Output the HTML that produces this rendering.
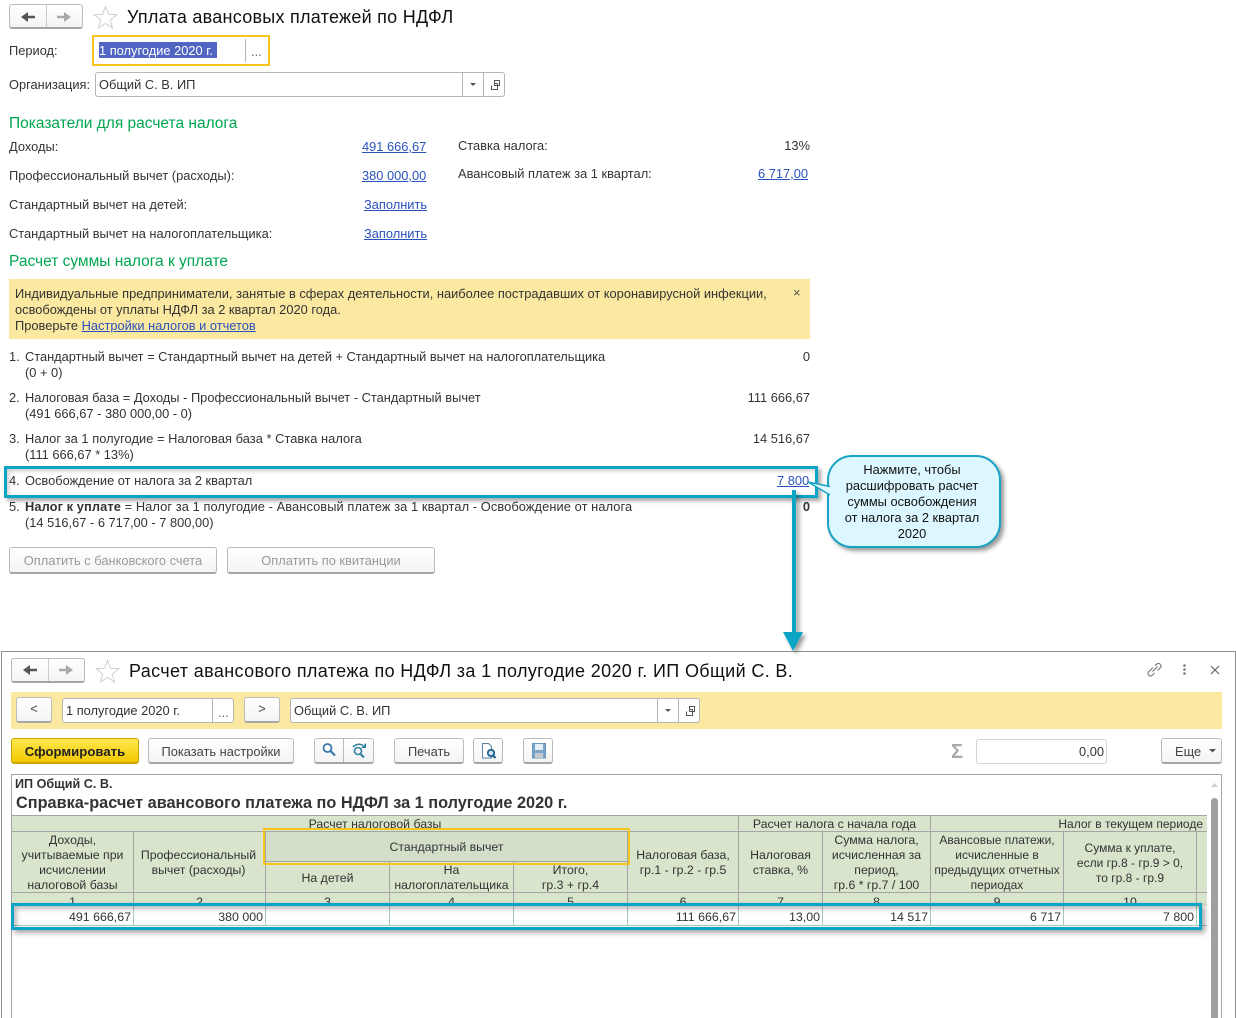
<!DOCTYPE html>
<html lang="ru"><head><meta charset="utf-8"><title>Уплата авансовых платежей по НДФЛ</title>
<style>
html,body{margin:0;padding:0;background:#fff;width:1236px;height:1018px;overflow:hidden}
#w{position:absolute;left:0;top:0;width:1236px;height:1018px;overflow:hidden;font:12.85px/16px "Liberation Sans",Arial,sans-serif;color:#333}
.t{position:absolute;white-space:nowrap}
.r{text-align:right}.c{text-align:center}
.b{position:absolute;box-sizing:border-box}
a,.l{color:#2a52be;text-decoration:underline}
.g{color:#00a650;font-size:15.5px;line-height:18px}
.btn{position:absolute;box-sizing:border-box;border:1px solid #bbb;border-bottom:2px solid #a5a5a5;border-radius:3px;background:linear-gradient(#fff,#f4f4f4);text-align:center;color:#444;line-height:22px}
.inp{position:absolute;box-sizing:border-box;border:1px solid #b5b5b5;border-radius:3px;background:#fff;line-height:24px;padding-left:3px}
.s{position:absolute;width:1px;background:#b5b5b5}
.h{font-size:18px;color:#111;letter-spacing:.26px;line-height:22px}
.cell{position:absolute;box-sizing:border-box;background:#d8e4cc;border-right:1px solid #a5a5a5;border-bottom:1px solid #a5a5a5;display:flex;align-items:center;justify-content:center;text-align:center;line-height:15px;color:#333;font-size:12.3px;padding-top:2px;white-space:nowrap;overflow:hidden}
.d{position:absolute;box-sizing:border-box;background:#fff;border-right:1px solid #a9c9c0;border-bottom:1px solid #a9c9c0;text-align:right;padding:2px 2px 0 0;line-height:19px;font-size:12.4px;color:#333}
.n{padding-top:3px;align-items:flex-start;line-height:13px}
</style></head><body><div id="w">

<!-- top form -->
<div class="btn" style="left:9px;top:4px;width:74px;height:25px"></div>
<div class="s" style="left:46px;top:5px;height:22px;background:#ccc"></div>
<svg class="b" style="left:9px;top:4px" width="74" height="25"><path d="M12 13l7-5v10z" fill="#555"/><path d="M18 13h8" stroke="#555" stroke-width="2.500"/><path d="M62 13l-7-5v10z" fill="#aaa"/><path d="M48 13h8" stroke="#aaa" stroke-width="2.500"/></svg>
<svg class="b" style="left:93px;top:5px" width="25" height="24"><path d="M12.500 1.500l3 7.800 8.300.5-6.500 5.200 2.200 8-7-4.500-7 4.500 2.200-8-6.500-5.200 8.300-.5z" fill="#fff" stroke="#cfcfcf"/></svg>
<div class="t h" style="left:127px;top:6px">Уплата авансовых платежей по НДФЛ</div>

<div class="t" style="left:9px;top:43px">Период:</div>
<div class="b" style="left:92px;top:35px;width:178px;height:31px;border:2px solid #f7c51e"></div>
<div class="b" style="left:99px;top:42px;width:118px;height:16px;background:#5066c2"></div>
<div class="t" style="left:99px;top:43px;color:#fff">1 полугодие 2020 г.</div>
<div class="s" style="left:245px;top:39px;height:23px"></div>
<div class="t" style="left:251px;top:44px;color:#666">...</div>

<div class="t" style="left:9px;top:77px">Организация:</div>
<div class="inp" style="left:95px;top:72px;width:410px;height:25px">Общий С. В. ИП</div>
<div class="s" style="left:462px;top:73px;height:23px"></div>
<div class="s" style="left:483px;top:73px;height:23px"></div>
<svg class="b" style="left:463px;top:73px" width="41" height="23"><path d="M7 10h6l-3 3z" fill="#555"/><path d="M28.500 12.500v4h6v-6h-3M31.500 7.500h5v5h-5z" fill="#fff" stroke="#555"/></svg>

<div class="t g" style="left:9px;top:115px">Показатели для расчета налога</div>
<div class="t" style="left:9px;top:139px">Доходы:</div>
<a class="t" style="left:362px;top:139px">491 666,67</a>
<div class="t" style="left:458px;top:138px">Ставка налога:</div>
<div class="t r" style="right:426px;top:138px">13%</div>
<div class="t" style="left:9px;top:168px">Профессиональный вычет (расходы):</div>
<a class="t" style="left:362px;top:168px">380 000,00</a>
<div class="t" style="left:458px;top:166px">Авансовый платеж за 1 квартал:</div>
<a class="t" style="left:758px;top:166px">6 717,00</a>
<div class="t" style="left:9px;top:197px">Стандартный вычет на детей:</div>
<a class="t" style="left:364px;top:197px">Заполнить</a>
<div class="t" style="left:9px;top:226px">Стандартный вычет на налогоплательщика:</div>
<a class="t" style="left:364px;top:226px">Заполнить</a>
<div class="t g" style="left:9px;top:253px">Расчет суммы налога к уплате</div>

<div class="b" style="left:9px;top:279px;width:801px;height:60px;background:#fbe9a2"></div>
<div class="t" style="left:15px;top:286px">Индивидуальные предприниматели, занятые в сферах деятельности, наиболее пострадавших от коронавирусной инфекции,</div>
<div class="t" style="left:15px;top:302px">освобождены от уплаты НДФЛ за 2 квартал 2020 года.</div>
<div class="t" style="left:15px;top:318px">Проверьте <a>Настройки налогов и отчетов</a></div>
<div class="t" style="left:793px;top:285px;color:#555">×</div>

<div class="t" style="left:9px;top:349px">1.</div><div class="t" style="left:25px;top:349px;letter-spacing:-.03px">Стандартный вычет = Стандартный вычет на детей + Стандартный вычет на налогоплательщика</div>
<div class="t" style="left:25px;top:365px">(0 + 0)</div>
<div class="t r" style="right:426px;top:349px">0</div>
<div class="t" style="left:9px;top:390px">2.</div><div class="t" style="left:25px;top:390px">Налоговая база = Доходы - Профессиональный вычет - Стандартный вычет</div>
<div class="t" style="left:25px;top:406px">(491 666,67 - 380 000,00 - 0)</div>
<div class="t r" style="right:426px;top:390px">111 666,67</div>
<div class="t" style="left:9px;top:431px">3.</div><div class="t" style="left:25px;top:431px;letter-spacing:.04px">Налог за 1 полугодие = Налоговая база * Ставка налога</div>
<div class="t" style="left:25px;top:447px">(111 666,67 * 13%)</div>
<div class="t r" style="right:426px;top:431px">14 516,67</div>
<div class="t" style="left:9px;top:473px">4.</div><div class="t" style="left:25px;top:473px">Освобождение от налога за 2 квартал</div>
<a class="t" style="left:777px;top:473px">7 800</a>
<div class="t" style="left:9px;top:499px">5.</div><div class="t" style="left:25px;top:499px;letter-spacing:.08px"><b>Налог к уплате</b> = Налог за 1 полугодие - Авансовый платеж за 1 квартал - Освобождение от налога</div>
<div class="t" style="left:25px;top:515px">(14 516,67 - 6 717,00 - 7 800,00)</div>
<div class="t r" style="right:426px;top:499px;font-weight:bold">0</div>

<div class="btn" style="left:9px;top:547px;width:208px;height:27px;color:#999;line-height:25px">Оплатить с банковского счета</div>
<div class="btn" style="left:227px;top:547px;width:208px;height:27px;color:#999;line-height:25px">Оплатить по квитанции</div>

<!-- lower window -->
<div class="b" style="left:1px;top:651px;width:1235px;height:380px;border:1px solid #8f8f8f;background:#fff"></div>
<div class="btn" style="left:11px;top:658px;width:74px;height:25px"></div>
<div class="s" style="left:48px;top:659px;height:22px;background:#ccc"></div>
<svg class="b" style="left:11px;top:658px" width="74" height="25"><path d="M12 12l7-5v10z" fill="#555"/><path d="M18 12h8" stroke="#555" stroke-width="2.500"/><path d="M62 12l-7-5v10z" fill="#aaa"/><path d="M48 12h8" stroke="#aaa" stroke-width="2.500"/></svg>
<svg class="b" style="left:95px;top:659px" width="25" height="24"><path d="M12.500 1.500l3 7.800 8.300.5-6.500 5.200 2.200 8-7-4.500-7 4.500 2.200-8-6.500-5.200 8.300-.5z" fill="#fff" stroke="#cfcfcf"/></svg>
<div class="t h" style="left:129px;top:660px;letter-spacing:.36px">Расчет авансового платежа по НДФЛ за 1 полугодие 2020 г. ИП Общий С. В.</div>
<svg class="b" style="left:1145px;top:661px" width="20" height="18"><g fill="none" stroke="#777" stroke-width="1.100"><path d="M8 6.500l-4.500 4.500a2.500 2.500 0 0 0 3.500 3.500l2.500-2.500"/><path d="M7.500 10.500l5-5M10 4.500l2-1.500a2.500 2.500 0 0 1 3.500 3.500l-3 3"/></g></svg>
<svg class="b" style="left:1180px;top:663px" width="8" height="14"><circle cx="4.500" cy="2.500" r="1.300" fill="#777"/><circle cx="4.500" cy="6.500" r="1.300" fill="#777"/><circle cx="4.500" cy="10.500" r="1.300" fill="#777"/></svg>
<svg class="b" style="left:1209px;top:664px" width="12" height="12"><path d="M2 2l8 8M10 2l-8 8" stroke="#666" stroke-width="1.200"/></svg>

<div class="b" style="left:11px;top:692px;width:1211px;height:37px;background:#fbe9a2"></div>
<div class="btn" style="left:16px;top:697px;width:36px;height:26px">&lt;</div>
<div class="inp" style="left:62px;top:698px;width:172px;height:25px">1 полугодие 2020 г.</div>
<div class="s" style="left:212px;top:699px;height:23px"></div>
<div class="t" style="left:218px;top:705px;color:#666">...</div>
<div class="btn" style="left:244px;top:697px;width:36px;height:26px">&gt;</div>
<div class="inp" style="left:290px;top:698px;width:410px;height:25px">Общий С. В. ИП</div>
<div class="s" style="left:657px;top:699px;height:23px"></div>
<div class="s" style="left:678px;top:699px;height:23px"></div>
<svg class="b" style="left:658px;top:699px" width="41" height="23"><path d="M7 10h6l-3 3z" fill="#555"/><path d="M28.500 12.500v4h6v-6h-3M31.500 7.500h5v5h-5z" fill="#fff" stroke="#555"/></svg>

<div class="btn" style="left:11px;top:738px;width:128px;height:26px;background:linear-gradient(#ffe84d,#f2c800);border-color:#c9a400;color:#222;font-weight:bold;font-size:13.2px;line-height:25px">Сформировать</div>
<div class="btn" style="left:148px;top:738px;width:146px;height:26px;line-height:25px">Показать настройки</div>
<div class="btn" style="left:314px;top:738px;width:60px;height:26px"></div>
<div class="s" style="left:343px;top:739px;height:23px;background:#bbb"></div>
<svg class="b" style="left:314px;top:738px" width="60" height="26"><circle cx="13.500" cy="10" r="4" fill="none" stroke="#3b78ad" stroke-width="1.800"/><path d="M16.500 13l4.500 4.500" stroke="#3b78ad" stroke-width="2.200"/><circle cx="44" cy="13" r="3.500" fill="none" stroke="#2f7fa3" stroke-width="1.600"/><path d="M46.500 16l3.500 3.500" stroke="#2f7fa3" stroke-width="2"/><path d="M39 9c3-3 7-3.500 10-1.500" fill="none" stroke="#2f7fa3" stroke-width="1.500"/><path d="M52 5v5h-5z" fill="#2f7fa3"/></svg>
<div class="btn" style="left:394px;top:738px;width:70px;height:26px;line-height:25px">Печать</div>
<div class="btn" style="left:473px;top:738px;width:30px;height:26px"></div>
<svg class="b" style="left:473px;top:738px" width="30" height="26"><path d="M9.500 5.500h6l3 3v11.500h-9z" fill="#fff" stroke="#5a7fa0"/><circle cx="18" cy="15" r="3.200" fill="#cfe3f2" stroke="#1f5f8f" stroke-width="1.800"/><path d="M20 17.500l2.500 2.500" stroke="#1f5f8f" stroke-width="2.200"/></svg>
<div class="btn" style="left:523px;top:738px;width:30px;height:26px"></div>
<svg class="b" style="left:523px;top:738px" width="30" height="26"><path d="M9.500 5.500h13v14.500h-13z" fill="#7ba6cc" stroke="#6a94ba"/><rect x="12" y="6" width="8" height="6" fill="#e6eef5"/><rect x="12" y="15" width="8" height="5" fill="#c4c9cf"/></svg>

<div class="t" style="left:951px;top:742px;font:bold 20px/20px 'Liberation Sans',sans-serif;color:#aaa">Σ</div>
<div class="inp" style="left:976px;top:739px;width:131px;height:25px;border-color:#d5d5d5;text-align:right;padding-right:2px">0,00</div>
<div class="btn" style="left:1161px;top:738px;width:61px;height:26px;line-height:25px;text-align:left;padding-left:13px">Еще</div>
<svg class="b" style="left:1209px;top:749px" width="8" height="5"><path d="M0 0h7l-3.500 3.500z" fill="#555"/></svg>

<!-- report -->
<div class="b" style="left:11px;top:774px;width:1211px;height:260px;border:1px solid #a5a5a5;background:#fff"></div>
<div class="t" style="left:15px;top:776px;font-weight:bold;font-size:12.6px;color:#333">ИП Общий С. В.</div>
<div class="t" style="left:16px;top:794px;font:bold 16.3px/19px 'Liberation Sans',sans-serif;color:#333">Справка-расчет авансового платежа по НДФЛ за 1 полугодие 2020 г.</div>

<div class="cell" style="left:12px;top:815px;width:727px;height:17px;border-top:1px solid #a5a5a5">Расчет налоговой базы</div>
<div class="cell" style="left:739px;top:815px;width:192px;height:17px;border-top:1px solid #a5a5a5">Расчет налога с начала года</div>
<div class="cell" style="left:931px;top:815px;width:276px;height:17px;border-top:1px solid #a5a5a5;border-right:0;justify-content:flex-end;padding-right:4px;font-size:12px">Налог в текущем периоде</div>

<div class="cell" style="left:12px;top:832px;width:122px;height:61px">Доходы,<br>учитываемые при<br>исчислении<br>налоговой базы</div>
<div class="cell" style="left:134px;top:832px;width:132px;height:61px;padding-right:2px">Профессиональный<br>вычет (расходы)</div>
<div class="cell" style="left:266px;top:832px;width:362px;height:30px;background:#d3dfc9">Стандартный вычет</div>
<div class="cell" style="left:266px;top:862px;width:124px;height:31px">На детей</div>
<div class="cell" style="left:390px;top:862px;width:124px;height:31px">На<br>налогоплательщика</div>
<div class="cell" style="left:514px;top:862px;width:114px;height:31px">Итого,<br>гр.3 + гр.4</div>
<div class="cell" style="left:628px;top:832px;width:111px;height:61px">Налоговая база,<br>гр.1 - гр.2 - гр.5</div>
<div class="cell" style="left:739px;top:832px;width:84px;height:61px">Налоговая<br>ставка, %</div>
<div class="cell" style="left:823px;top:832px;width:108px;height:61px">Сумма налога,<br>исчисленная за<br>период,<br>гр.6 * гр.7 / 100</div>
<div class="cell" style="left:931px;top:832px;width:133px;height:61px;font-size:12px">Авансовые платежи,<br>исчисленные в<br>предыдущих отчетных<br>периодах</div>
<div class="cell" style="left:1064px;top:832px;width:133px;height:61px;font-size:12px">Сумма к уплате,<br>если гр.8 - гр.9 &gt; 0,<br>то гр.8 - гр.9</div>
<div class="cell" style="left:1197px;top:832px;width:10px;height:61px;border-right:0"></div>

<div class="cell n" style="left:12px;top:893px;width:122px;height:15px">1</div>
<div class="cell n" style="left:134px;top:893px;width:132px;height:15px">2</div>
<div class="cell n" style="left:266px;top:893px;width:124px;height:15px">3</div>
<div class="cell n" style="left:390px;top:893px;width:124px;height:15px">4</div>
<div class="cell n" style="left:514px;top:893px;width:114px;height:15px">5</div>
<div class="cell n" style="left:628px;top:893px;width:111px;height:15px">6</div>
<div class="cell n" style="left:739px;top:893px;width:84px;height:15px">7</div>
<div class="cell n" style="left:823px;top:893px;width:108px;height:15px">8</div>
<div class="cell n" style="left:931px;top:893px;width:133px;height:15px">9</div>
<div class="cell n" style="left:1064px;top:893px;width:133px;height:15px">10</div>
<div class="cell n" style="left:1197px;top:893px;width:10px;height:15px;border-right:0"></div>

<div class="d" style="left:12px;top:906px;width:122px;height:20px">491 666,67</div>
<div class="d" style="left:134px;top:906px;width:132px;height:20px">380 000</div>
<div class="d" style="left:266px;top:906px;width:124px;height:20px"></div>
<div class="d" style="left:390px;top:906px;width:124px;height:20px"></div>
<div class="d" style="left:514px;top:906px;width:114px;height:20px"></div>
<div class="d" style="left:628px;top:906px;width:111px;height:20px">111 666,67</div>
<div class="d" style="left:739px;top:906px;width:84px;height:20px">13,00</div>
<div class="d" style="left:823px;top:906px;width:108px;height:20px">14 517</div>
<div class="d" style="left:931px;top:906px;width:133px;height:20px">6 717</div>
<div class="d" style="left:1064px;top:906px;width:133px;height:20px">7 800</div>
<div class="d" style="left:1197px;top:906px;width:10px;height:20px;border-right:0"></div>

<!-- scrollbar -->
<div class="b" style="left:1211px;top:798px;width:7px;height:230px;background:#a0a0a0;border-radius:4px"></div>
<svg class="b" style="left:1211px;top:782px" width="8" height="6"><path d="M0 5h7l-3.500-4z" fill="#d0d0d0"/></svg>

<!-- annotations -->
<div class="b" style="left:263px;top:828px;width:367px;height:37px;border:2px solid #f7c51e"></div>
<div class="b" style="left:11px;top:903px;width:1191px;height:27px;border:3px solid #0ca5c5;box-shadow:3px 3px 5px rgba(0,0,0,.35),inset 3px 3px 5px rgba(0,0,0,.25)"></div>
<div class="b" style="left:4px;top:466px;width:814px;height:32px;border:3px solid #0ca5c5;box-shadow:3px 3px 4px rgba(0,0,0,.35),inset 2px 2px 4px rgba(0,0,0,.2)"></div>
<svg class="b" style="left:780px;top:440px;overflow:visible" width="60" height="220">
<defs><filter id="sh" x="-30%" y="-10%" width="160%" height="120%"><feDropShadow dx="3" dy="3" stdDeviation="2" flood-color="#000" flood-opacity=".4"/></filter></defs>
<path d="M12 50v142h-9l10 19 10-19h-7V50z" fill="#0ca5c5" filter="url(#sh)"/>
</svg>
<div class="b" style="left:827px;top:455px;width:174px;height:93px;background:#dcf7ff;border:2px solid #17a3c4;border-radius:25px;box-shadow:3px 3px 4px rgba(0,0,0,.4)"></div>
<svg class="b" style="left:806px;top:478px" width="26" height="22"><path d="M2 4l23 5v9z" fill="#dcf7ff"/><path d="M2 4l22 4.500M2 4l22 13" stroke="#17a3c4" stroke-width="1.500" fill="none"/></svg>
<div class="t c" style="left:827px;top:462px;width:170px;color:#111;line-height:16px">Нажмите, чтобы<br>расшифровать расчет<br>суммы освобождения<br>от налога за 2 квартал<br>2020</div>

</div></body></html>
